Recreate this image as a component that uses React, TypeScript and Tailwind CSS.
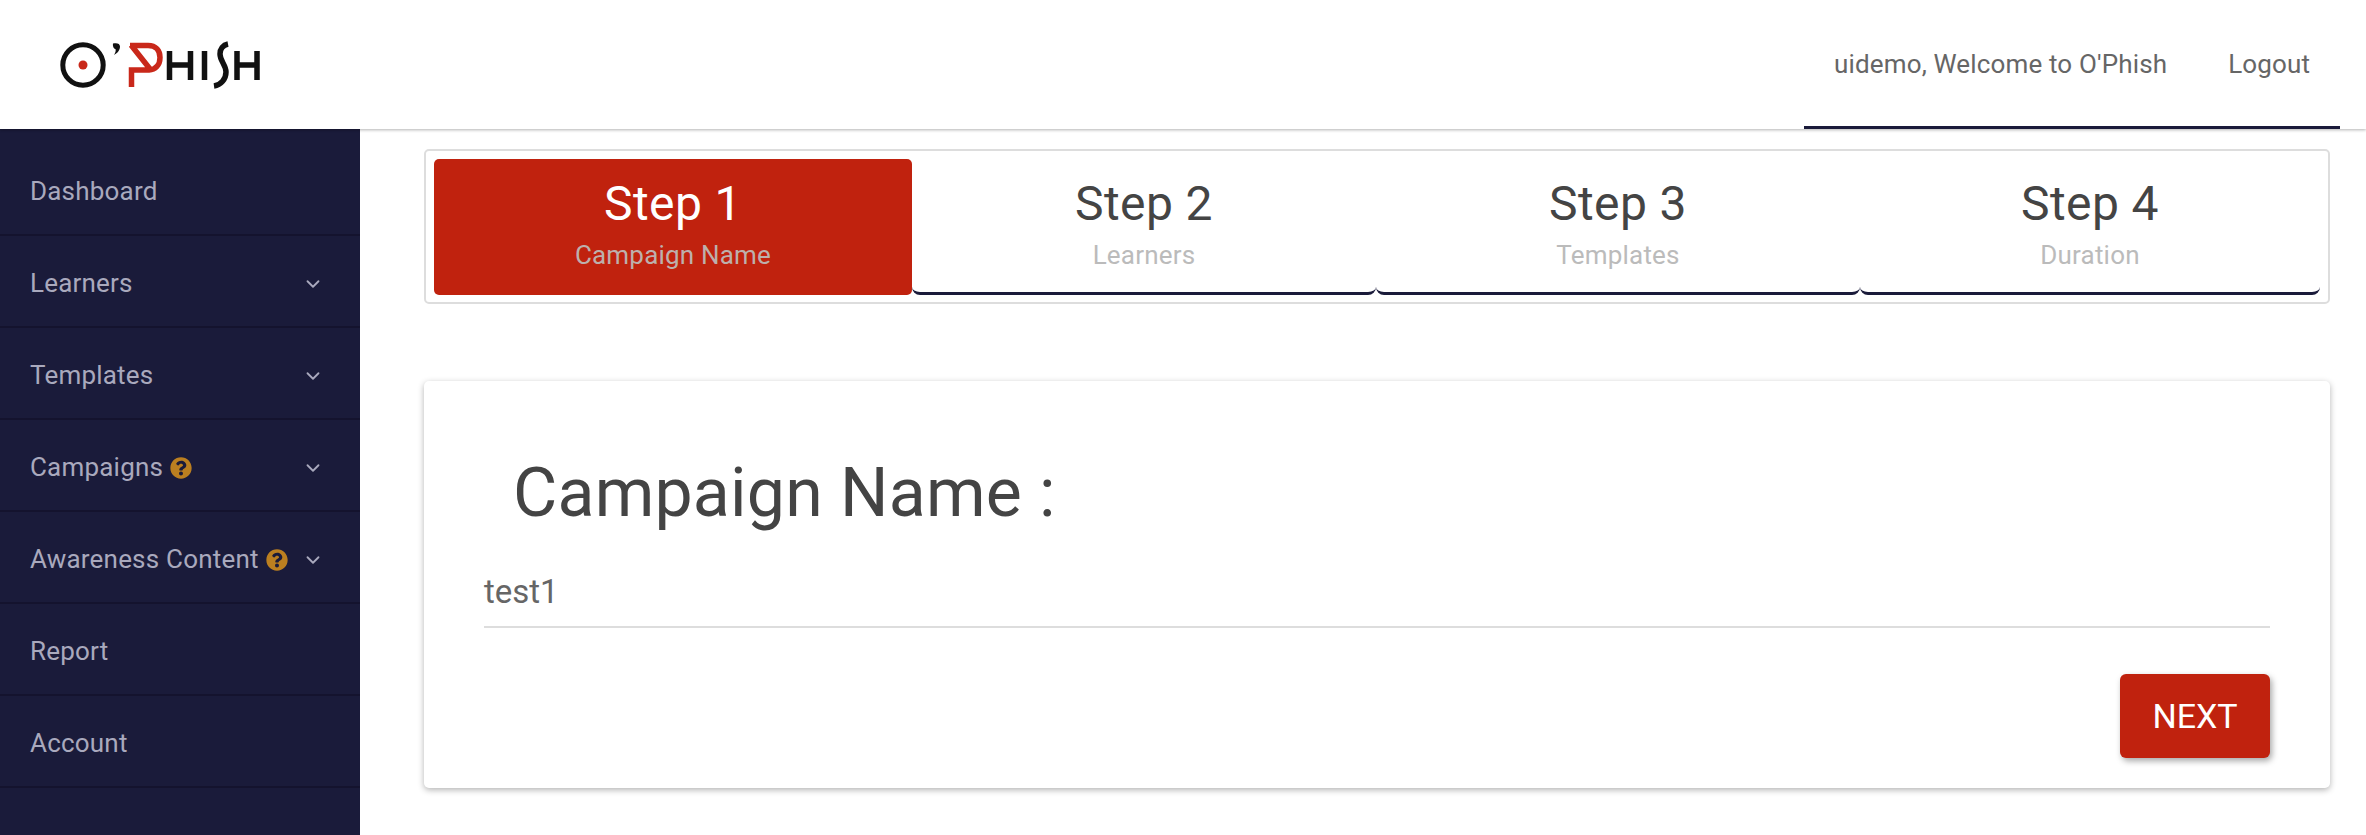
import { ChevronDown } from 'lucide-react';
import { FaQuestionCircle } from 'react-icons/fa';

const navItems = [
  { label: 'Dashboard' },
  { label: 'Learners', chevron: true },
  { label: 'Templates', chevron: true },
  { label: 'Campaigns', chevron: true, help: true },
  { label: 'Awareness Content', chevron: true, help: true },
  { label: 'Report' },
  { label: 'Account' },
];

const steps = [
  { title: 'Step 1', sub: 'Campaign Name', width: 'w-[478px]', active: true },
  { title: 'Step 2', sub: 'Learners', width: 'w-[464px]' },
  { title: 'Step 3', sub: 'Templates', width: 'w-[484px]' },
  { title: 'Step 4', sub: 'Duration', width: 'w-[460px]' },
];

function Logo() {
  return (
    <svg width="204" height="50" viewBox="58 39 204 50" fill="none">
      <circle cx="83" cy="64" r="20.2" stroke="#111" strokeWidth="5" />
      <circle cx="83" cy="64" r="4.5" fill="#c9281a" />
      <path d="M113 42.500c4-1 7 0 7 3 0 4-3 7-6 8.500 1.500-2.500 2-4 1.500-6-1.500 0-3-2.500-2.500-5.500z" fill="#111" />
      <path
        d="M131.500 86V69H150M130 44.500h18c8 0 12 5 12 12 0 8-5 12-11 12.500M131 44l19 24"
        stroke="#c9281a"
        strokeWidth="5.500"
      />
      <path
        d="M169.500 50v29M190.500 50v29M169.500 64h21M204.500 50v29M237 50v29M257 50v29M237 64h20"
        stroke="#111"
        strokeWidth="5.500"
      />
      <path d="M228 43c-5 1-8 5-8 10 0 7 6 11 6 18 0 7-5 13-12 14" stroke="#111" strokeWidth="5.500" />
    </svg>
  );
}

export default function App() {
  return (
    <div className="flex h-[835px] w-full flex-col overflow-hidden bg-white font-['Roboto',sans-serif]">
      {/* Top bar */}
      <header className="relative z-10 flex h-[129px] shrink-0 items-center justify-between shadow-[0_1px_3px_rgba(0,0,0,0.3)]">
        <div className="pl-[58px]">
          <Logo />
        </div>
        <nav className="mr-[26px] flex h-full w-[536px] items-center border-b-[3px] border-[#1a1b3a] pl-[30px] pt-[3px] text-[26px] tracking-[0.15px] text-[#666]">
          <span>uidemo, Welcome to O'Phish</span>
          <span className="ml-[61px]">Logout</span>
        </nav>
      </header>

      <div className="flex min-h-0 flex-1">
        {/* Sidebar */}
        <aside className="w-[360px] shrink-0 bg-[#1a1b3a] pt-[15px]">
          {navItems.map((item) => (
            <div
              key={item.label}
              className="flex h-[92px] items-center border-b-2 border-[#14132e] pl-[30px] pr-[36px] pt-[5px] text-[26px] tracking-[0.2px] text-[#a9a9bd]"
            >
              <span>{item.label}</span>
              {item.help && <FaQuestionCircle className="ml-[7px] h-[22px] w-[22px] shrink-0 text-[#bb7f20]" />}
              {item.chevron && <ChevronDown className="ml-auto h-[22px] w-[22px]" strokeWidth={2} />}
            </div>
          ))}
        </aside>

        {/* Main */}
        <main className="min-w-0 flex-1 pl-[64px] pr-[36px] pt-[20px]">
          <div className="flex h-[155px] rounded-[5px] border-2 border-[#ddd] pl-[8px] pt-[8px]">
            {steps.map((step) => (
              <div
                key={step.title}
                className={
                  step.active
                    ? `${step.width} h-[136px] rounded-[5px] bg-[#c0220e] pt-[15px] text-center`
                    : `${step.width} h-[136px] rounded-b-[8px] border-b-[3px] border-[#1a1b3a] pt-[15px] text-center`
                }
              >
                <div className={step.active ? 'text-[48px] leading-[60px] tracking-[0.4px] text-white' : 'text-[48px] leading-[60px] tracking-[0.4px] text-[#444]'}>
                  {step.title}
                </div>
                <div className={step.active ? 'mt-[3px] text-[26px] leading-[36px] tracking-[0.2px] text-[#bdb0ac]' : 'mt-[3px] text-[26px] leading-[36px] tracking-[0.2px] text-[#bbb]'}>
                  {step.sub}
                </div>
              </div>
            ))}
          </div>

          <section className="mt-[77px] h-[407px] rounded-[5px] bg-white px-[60px] pt-[72px] shadow-[0_2px_6px_rgba(0,0,0,0.3)]">
            <h1 className="pl-[29px] text-[68px] leading-[80px] tracking-[0.2px] text-[#444]">Campaign Name :</h1>
            <div className="mt-[39px] h-[56px] border-b-2 border-[#ddd] text-[33px] leading-[40px] text-[#666]">test1</div>
            <div className="mt-[46px] flex justify-end">
              <button className="h-[84px] w-[150px] rounded-[6px] bg-[#c0220e] text-[34px] text-white shadow-[2px_3px_6px_rgba(0,0,0,0.35)]">
                NEXT
              </button>
            </div>
          </section>
        </main>
      </div>
    </div>
  );
}
